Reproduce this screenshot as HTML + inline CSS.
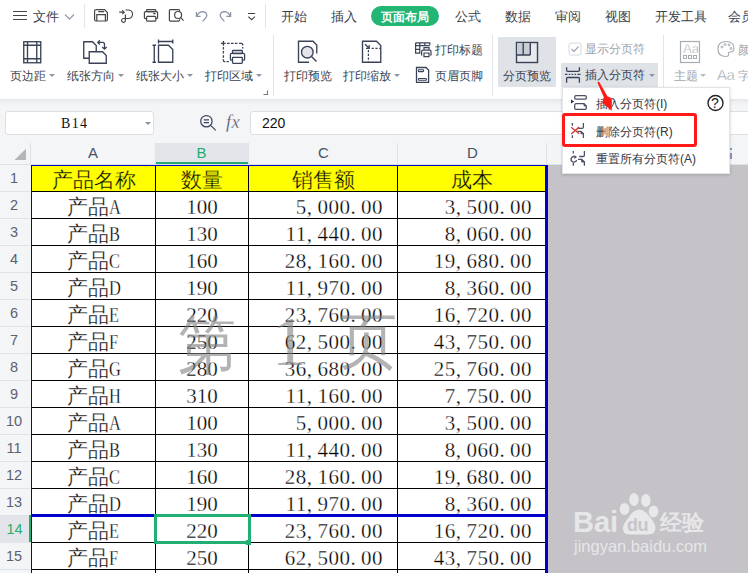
<!DOCTYPE html>
<html><head><meta charset="utf-8">
<style>
*{margin:0;padding:0;box-sizing:border-box}
html,body{width:748px;height:573px;overflow:hidden;background:#fff;font-family:"Liberation Sans",sans-serif;color:#3a3f4e}
.a{position:absolute}
svg{position:absolute;overflow:visible}
.tab{position:absolute;top:9px;font-size:12.5px;line-height:16px;color:#3a3f4e;white-space:nowrap}
.lbl{position:absolute;top:68px;font-size:12px;line-height:16px;color:#3a3f4e;white-space:nowrap}
.tri{position:absolute;width:0;height:0;border-left:3px solid transparent;border-right:3px solid transparent;border-top:3px solid #8d93a3}
.sep{position:absolute;width:1px;background:#e3e5ea}
/* sheet */
.cell{position:absolute;height:27px;line-height:27px;padding-top:2px;font-size:21px;color:#000;white-space:nowrap;font-family:"Liberation Serif",serif}
.hdr{text-align:center;-webkit-text-stroke:0.3px #ffff00}
.ctr{text-align:center;-webkit-text-stroke:0.3px #fff}
.rgt{text-align:right}
.rgt{letter-spacing:0.5px;-webkit-text-stroke:0.3px #fff}
.cell i{font-style:normal;display:inline-block;width:10.6px;text-align:left}
.lat{display:inline-block;transform:scaleX(0.78);transform-origin:0 50%;width:11px;text-align:left}
.rh{position:absolute;left:0;width:28px;height:27px;line-height:27px;text-align:center;font-size:14.5px;color:#5a6174}
.rsel{background:#e3e5ea;color:#1fae6d;width:29px}
.hl{position:absolute;left:31px;width:515px;height:1px;background:#000}
.rhl{position:absolute;left:0;width:30px;height:1px;background:#dde1e8}
.vl{position:absolute;top:165px;width:1px;height:408px;background:#000}
.ch{position:absolute;top:142px;height:21px;line-height:21px;text-align:center;font-size:15px;color:#485066}
.mi{position:absolute;left:596px;font-size:12px;line-height:16px;color:#2f3444;white-space:nowrap}
</style></head><body>

<!-- ===== top tab bar ===== -->
<div class="a" style="left:13px;top:11px;width:14px;height:1.2px;background:#444"></div>
<div class="a" style="left:13px;top:15px;width:14px;height:1.2px;background:#444"></div>
<div class="a" style="left:13px;top:19px;width:14px;height:1.2px;background:#444"></div>
<div class="tab" style="left:33px">文件</div>
<svg style="left:0;top:0" width="748" height="32" fill="none" stroke="#454545" stroke-width="1.3">
 <path d="M65 14.5 L69.5 19 L74 14.5" stroke="#9aa0ac"/>
 <!-- save -->
 <path d="M95.6 9.7 H104.6 L107.4 12.5 V19.8 Q107.4 21 106.2 21 H95.8 Q94.6 21 94.6 19.8 V10.9 Q94.6 9.7 95.8 9.7 Z M98.2 11.7 H104.2 M96.8 21 V14.6 H105.4 V21" stroke-width="1.2"/>
 <!-- convert -->
 <path d="M119.2 12.2 H124.2 M122.3 10.3 L124.2 12.2 L122.3 14.1 M125.5 10 H128.3 A4.25 4.25 0 0 1 128.3 18.5 H123.4 A1.9 1.9 0 1 0 125.4 20.4 V14.4" stroke-width="1.2"/>
 <!-- print -->
 <rect x="146.6" y="9.6" width="9.2" height="2" rx="0.8" stroke-width="1.2"/>
 <path d="M146.3 18.6 H145.4 Q144.4 18.6 144.4 17.6 V12.8 Q144.4 11.6 145.6 11.6 H156.6 Q157.6 11.6 157.6 12.8 V17.6 Q157.6 18.6 156.6 18.6 H155.8 M153.2 13.6 H155.6" stroke-width="1.2"/>
 <rect x="146.6" y="16.4" width="9.2" height="4.8" rx="0.9" stroke-width="1.2"/>
 <!-- preview -->
 <path d="M176 21.1 H170.4 Q169.4 21.1 169.4 20.1 V10.6 Q169.4 9.6 170.4 9.6 H178.6 Q179.6 9.6 179.6 10.6 V11.4 M179.6 19.2 V20.1 Q179.6 21.1 178.6 21.1 H176" stroke-width="1.2"/>
 <circle cx="178.1" cy="15" r="3.5" stroke-width="1.2"/>
 <path d="M180.7 17.7 L183.6 20.6" stroke-width="1.2"/>
 <!-- undo -->
 <path d="M196.4 12 V16.4 H200.6 M197 15.8 Q199 11.6 202.4 11.6 Q206.8 11.8 206.8 15.6 Q206.8 17.4 202.6 21.4" stroke="#8a93a7" stroke-width="1.25"/>
 <!-- redo -->
 <path d="M230.6 12 V16.4 H226.4 M230 15.8 Q228 11.6 224.6 11.6 Q220.2 11.8 220.2 15.6 Q220.2 17.4 224.4 21.4" stroke="#8a93a7" stroke-width="1.25"/>
 <!-- customize -->
 <path d="M248 13.5 H255.2 M248.3 16.6 L251.6 19.6 L254.9 16.6" stroke="#454545" stroke-width="1.2"/>
</svg>
<div class="sep" style="left:84px;top:4px;height:24px"></div>
<div class="sep" style="left:265px;top:4px;height:24px"></div>
<div class="tab" style="left:281px">开始</div>
<div class="tab" style="left:331px">插入</div>
<div class="a" style="left:371px;top:6px;width:68px;height:20px;border-radius:10px;background:#22b574"></div>
<div class="tab" style="left:381px;color:#fff;font-weight:bold;font-size:12px">页面布局</div>
<div class="tab" style="left:455px">公式</div>
<div class="tab" style="left:505px">数据</div>
<div class="tab" style="left:555px">审阅</div>
<div class="tab" style="left:605px">视图</div>
<div class="tab" style="left:655px">开发工具</div>
<div class="tab" style="left:728px">会员</div>

<!-- ===== ribbon ===== -->
<div class="a" style="left:498px;top:37px;width:58px;height:50px;background:#dfe2e7"></div>
<div class="a" style="left:561px;top:63px;width:97px;height:24px;background:#dfe2e7"></div>
<svg style="left:0;top:0" width="748" height="100" fill="none" stroke="#3a4258" stroke-width="1.35">
 <!-- margins -->
 <rect x="23.75" y="41.75" width="17" height="21"/>
 <path d="M27.5 41.75 V62.75 M36.75 41.75 V62.75 M23.75 45.25 H40.75 M23.75 58.75 H40.75"/>
 <!-- orientation -->
 <path d="M89 58.25 H83.75 V41.75 H92.5 L96.25 45.5 V51.5"/>
 <path d="M89.25 51.75 H102.5 L106.25 55.5 V63.25 H89.25 Z"/>
 <path d="M98 42.4 H102.6 Q104.5 42.4 104.5 44.4 V49" stroke-width="1.3"/>
 <path d="M99.9 40.3 L97.8 42.4 L99.9 44.5 M102.3 47 L104.5 49.2 L106.7 47" stroke-width="1.3"/>
 <!-- paper size -->
 <path d="M158.5 41.5 H172.75 M158.5 39.5 V43.5 M172.75 39.5 V43.5"/>
 <path d="M154.25 45.25 V62.25 M152.5 45.25 H156 M152.5 62.25 H156"/>
 <path d="M158.5 45.25 H168.5 L172.75 49.5 V62.25 H158.5 Z"/>
 <!-- print area -->
 <path d="M221 43.3 H225.7 M223.4 41 V45.7 M227 43.3 H229.6 M230.9 43.3 H233.6 M234.9 43.3 H237.5 M239 43.3 H241.6 Q242.7 43.3 242.7 44.4 V45.5 M242.7 46.9 V48.6 M223.4 46.9 V49.5 M223.4 51 V53.5 M223.4 55.3 V57.8 M223.4 59.2 V60.6 Q223.4 61.7 224.5 61.7 H225.3 M226.5 61.7 H228.8" stroke-width="1.3"/>
 <rect x="232.5" y="50.5" width="9.8" height="3" rx="0.6" stroke-width="1.3"/>
 <path d="M232.3 60.2 H231.4 Q230.4 60.2 230.4 59.2 V54.6 Q230.4 53.4 231.6 53.4 H243.4 Q244.6 53.4 244.6 54.6 V59.2 Q244.6 60.2 243.6 60.2 H242.4" stroke-width="1.3"/>
 <rect x="232.5" y="57.4" width="9.8" height="5.9" rx="0.7" stroke-width="1.3" fill="#fff"/>
 <path d="M263.5 94.5 H267.5 V90.5" stroke="#6f7893" stroke-width="1.1"/>
 <!-- print preview -->
 <path d="M309 62.25 H298.5 V41.25 H313 L316.75 45 V53.5"/>
 <circle cx="307.3" cy="52.2" r="5.8" fill="#e3e5ea"/>
 <path d="M311.5 56.5 L316.5 61.5"/>
 <!-- print scale -->
 <path d="M362.5 41.25 H376.5 L380.75 45.5 V62.25 H362.5 Z"/>
 <path d="M368.4 50 V62.5" stroke-dasharray="2.2 1.6" stroke-width="1.25"/>
 <path d="M371.6 48.3 H380.6" stroke-dasharray="2.2 1.6" stroke-width="1.25"/>
 <path d="M365 44.3 L369.2 48.3 M366 48.3 H369.2 V45.1" stroke-width="1.25"/>
 <!-- print titles -->
 <path d="M415.6 42.8 H429.8 V45 M415.6 42.8 V53.2 H419.8 V42.8 M415.6 45.6 H429.8 M415.6 49.4 H419.8 M424.8 42.8 V45.6" stroke-width="1.2"/>
 <path d="M424 50.2 V47.6 H429 V50.2 M422.4 55 H421.6 V51.6 Q421.6 50.2 423 50.2 H429.8 Q431 50.2 431 51.6 V55 H430 M424 53 H429 V56.6 H424 Z" stroke-width="1.2" fill="#fff"/>
 <!-- header footer -->
 <path d="M416.5 67.5 H426 L428.6 70.1 V82.4 H416.5 Z" stroke-width="1.3"/>
 <rect x="418.4" y="69.8" width="5.2" height="1.8" rx="0.6" stroke-width="1.1"/>
 <rect x="418.4" y="78.5" width="8" height="1.8" rx="0.6" stroke-width="1.1"/>
 <!-- page break preview -->
 <rect x="516.5" y="42.5" width="21" height="20" fill="#e8eaed" stroke-width="1.4"/>
 <rect x="517" y="43" width="13" height="12" fill="#c9cdd4" stroke="none"/>
 <path d="M523.2 42.5 V55 M530.3 42.5 V55 M516.5 55 H530.3" stroke-width="1.4"/>
 <!-- checkbox -->
 <rect x="569" y="43" width="12" height="12" rx="2" stroke="#d5d8de" stroke-width="1"/>
 <path d="M571.5 49 L574 51.5 L578.5 46.5" stroke="#a5a9b2" stroke-width="1.3"/>
 <!-- insert page break icon -->
 <path d="M566.6 67.2 V70.2 Q566.6 71.3 567.7 71.3 H578.3 Q579.4 71.3 579.4 70.2 V67.2 M566.6 82.8 V78.6 Q566.6 77.5 567.7 77.5 H578.3 Q579.4 77.5 579.4 78.6 V82.8" stroke-width="1.3"/>
 <path d="M565 74.3 H581" stroke-dasharray="2.4 1.4 1.5 1.4 1.5 1.4 1.5 1.4 3" stroke-width="1.3"/>
 <!-- theme -->
 <rect x="680.5" y="41.5" width="19" height="21" stroke="#a8acb3" stroke-width="1.2"/>
 <rect x="683.5" y="55.5" width="3" height="3" stroke="#a8acb3" stroke-width="1"/>
 <rect x="688.5" y="55.5" width="3" height="3" stroke="#a8acb3" stroke-width="1"/>
 <rect x="693.5" y="55.5" width="3" height="3" stroke="#a8acb3" stroke-width="1"/>
 <!-- palette -->
 <path d="M726 41.5 Q734 41.5 734 48.5 Q734 52 730.5 52 Q728 52 728.5 54 Q729 56.5 726 56.5 Q718 56.5 718 49 Q718 41.5 726 41.5 Z" stroke="#a8acb3" stroke-width="1.2"/>
 <circle cx="722" cy="47" r="1" stroke="#a8acb3" stroke-width="1"/>
 <circle cx="725" cy="44.5" r="1" stroke="#a8acb3" stroke-width="1"/>
 <circle cx="729" cy="45" r="1" stroke="#a8acb3" stroke-width="1"/>
 <circle cx="731" cy="48.5" r="1" stroke="#a8acb3" stroke-width="1"/>
</svg>
<div class="a" style="left:683px;top:42px;font-size:13px;line-height:14px;color:#a8acb3;-webkit-text-stroke:0.3px #fff">Aa</div>
<div class="lbl" style="left:10px">页边距</div><div class="tri" style="left:49px;top:74px"></div>
<div class="lbl" style="left:67px">纸张方向</div><div class="tri" style="left:118px;top:74px"></div>
<div class="lbl" style="left:136px">纸张大小</div><div class="tri" style="left:187px;top:74px"></div>
<div class="lbl" style="left:205px">打印区域</div><div class="tri" style="left:256px;top:74px"></div>
<div class="sep" style="left:273px;top:35px;height:61px"></div>
<div class="lbl" style="left:284px">打印预览</div>
<div class="lbl" style="left:343px">打印缩放</div><div class="tri" style="left:394px;top:74px"></div>
<div class="lbl" style="left:435px;top:42px">打印标题</div>
<div class="lbl" style="left:435px;top:68px">页眉页脚</div>
<div class="sep" style="left:492px;top:35px;height:61px"></div>
<div class="lbl" style="left:503px">分页预览</div>
<div class="lbl" style="left:585px;top:41px;color:#a0a4ad">显示分页符</div>
<div class="lbl" style="left:585px;top:67px">插入分页符</div><div class="tri" style="left:649px;top:74px"></div>
<div class="sep" style="left:663px;top:35px;height:52px"></div>
<div class="lbl" style="left:674px;color:#a0a4ad">主题</div><div class="tri" style="left:700px;top:74px;border-top-color:#b8bcc4"></div>
<div class="lbl" style="left:738px;top:42px;color:#a0a4ad">颜色</div>
<div class="a" style="left:717px;top:67px;font-size:15px;line-height:16px;color:#a0a4ad;letter-spacing:-0.4px;-webkit-text-stroke:0.35px #fff">Aa</div>
<div class="lbl" style="left:738px;color:#a0a4ad">字体</div>

<!-- ===== formula bar ===== -->
<div class="a" style="left:0;top:99px;width:748px;height:474px;background:#f4f5f7"></div>
<div class="a" style="left:0;top:99px;width:748px;height:6px;background:linear-gradient(#e6e7ea,#f4f5f7)"></div>
<div class="a" style="left:5px;top:111px;width:149px;height:23.5px;background:#fff;border:1px solid #dcdfe4;border-radius:3px"></div>
<div class="a" style="left:61px;top:116px;font-size:14px;line-height:16px;color:#111;font-family:'Liberation Serif',serif;letter-spacing:1.3px">B14</div>
<div class="tri" style="left:145px;top:122px;border-top-color:#8a90a0"></div>
<svg style="left:0;top:0" width="748" height="140" fill="none" stroke="#3f4760" stroke-width="1.25">
 <circle cx="206.4" cy="121.2" r="5.7"/>
 <path d="M210.6 125.4 L215.8 130.4 M203.8 119.8 H209 M203.8 122.6 H209"/>
</svg>
<div class="a" style="left:226px;top:112px;font-size:18.5px;line-height:20px;color:#3f4760;font-family:'Liberation Serif',serif;font-style:italic;letter-spacing:0.3px;-webkit-text-stroke:0.3px #f4f5f7">fx</div>
<div class="a" style="left:250px;top:111px;width:510px;height:23.5px;background:#fff;border:1px solid #dcdfe4;border-radius:3px"></div>
<div class="a" style="left:262px;top:114px;font-size:14px;line-height:18px;color:#111">220</div>

<!-- ===== sheet ===== -->
<div class="a" style="left:155px;top:143px;width:93px;height:21px;background:#e3e5ea"></div>
<div class="a" style="left:155px;top:162px;width:93px;height:2px;background:#1fae6d"></div>
<div class="a" style="left:0;top:164px;width:748px;height:1px;background:#dde1e8"></div>
<div class="a" style="left:30px;top:143px;width:1px;height:22px;background:#dde1e8"></div>
<div class="a" style="left:155px;top:143px;width:1px;height:21px;background:#dde1e8"></div>
<div class="a" style="left:248px;top:143px;width:1px;height:21px;background:#dde1e8"></div>
<div class="a" style="left:397px;top:143px;width:1px;height:21px;background:#dde1e8"></div>
<div class="a" style="left:546px;top:143px;width:1px;height:21px;background:#dde1e8"></div>
<svg style="left:0;top:0" width="40" height="170"><path d="M14.5 160 L26 148.8 L26 160 Z" fill="#b4b6ba"/></svg>
<div class="ch" style="left:31px;width:124px">A</div>
<div class="ch" style="left:155px;width:93px;color:#1fae6d">B</div>
<div class="ch" style="left:249px;width:149px">C</div>
<div class="ch" style="left:398px;width:149px">D</div>
<div class="a" style="left:31px;top:165px;width:515px;height:408px;background:#fff"></div>
<div class="a" style="left:548px;top:165px;width:200px;height:408px;background:#c5c3c7"></div>
<div class="a" style="left:31px;top:166px;width:515px;height:25px;background:#ffff00"></div>
<div class="hl" style="top:191px"></div>
<div class="rhl" style="top:191px"></div>
<div class="hl" style="top:218px"></div>
<div class="rhl" style="top:218px"></div>
<div class="hl" style="top:245px"></div>
<div class="rhl" style="top:245px"></div>
<div class="hl" style="top:272px"></div>
<div class="rhl" style="top:272px"></div>
<div class="hl" style="top:299px"></div>
<div class="rhl" style="top:299px"></div>
<div class="hl" style="top:326px"></div>
<div class="rhl" style="top:326px"></div>
<div class="hl" style="top:353px"></div>
<div class="rhl" style="top:353px"></div>
<div class="hl" style="top:380px"></div>
<div class="rhl" style="top:380px"></div>
<div class="hl" style="top:407px"></div>
<div class="rhl" style="top:407px"></div>
<div class="hl" style="top:434px"></div>
<div class="rhl" style="top:434px"></div>
<div class="hl" style="top:461px"></div>
<div class="rhl" style="top:461px"></div>
<div class="hl" style="top:488px"></div>
<div class="rhl" style="top:488px"></div>
<div class="hl" style="top:515px"></div>
<div class="rhl" style="top:515px"></div>
<div class="hl" style="top:542px"></div>
<div class="rhl" style="top:542px"></div>
<div class="hl" style="top:569px"></div>
<div class="rhl" style="top:569px"></div>
<div class="vl" style="left:155px"></div>
<div class="vl" style="left:248px"></div>
<div class="vl" style="left:397px"></div>
<div class="rh" style="top:165px">1</div>
<div class="cell hdr" style="left:32px;top:165px;width:123px">产品名称</div>
<div class="cell hdr" style="left:156px;top:165px;width:92px">数量</div>
<div class="cell hdr" style="left:249px;top:165px;width:148px">销售额</div>
<div class="cell hdr" style="left:398px;top:165px;width:148px">成本</div>
<div class="rh" style="top:192px">2</div>
<div class="cell ctr" style="left:32px;top:192px;width:123px">产品<span class=lat>A</span></div>
<div class="cell ctr" style="left:156px;top:192px;width:92px">100</div>
<div class="cell rgt" style="left:248px;top:192px;width:135px">5<i>,</i>000<i>.</i>00</div>
<div class="cell rgt" style="left:397px;top:192px;width:135px">3<i>,</i>500<i>.</i>00</div>
<div class="rh" style="top:219px">3</div>
<div class="cell ctr" style="left:32px;top:219px;width:123px">产品<span class=lat>B</span></div>
<div class="cell ctr" style="left:156px;top:219px;width:92px">130</div>
<div class="cell rgt" style="left:248px;top:219px;width:135px">11<i>,</i>440<i>.</i>00</div>
<div class="cell rgt" style="left:397px;top:219px;width:135px">8<i>,</i>060<i>.</i>00</div>
<div class="rh" style="top:246px">4</div>
<div class="cell ctr" style="left:32px;top:246px;width:123px">产品<span class=lat>C</span></div>
<div class="cell ctr" style="left:156px;top:246px;width:92px">160</div>
<div class="cell rgt" style="left:248px;top:246px;width:135px">28<i>,</i>160<i>.</i>00</div>
<div class="cell rgt" style="left:397px;top:246px;width:135px">19<i>,</i>680<i>.</i>00</div>
<div class="rh" style="top:273px">5</div>
<div class="cell ctr" style="left:32px;top:273px;width:123px">产品<span class=lat>D</span></div>
<div class="cell ctr" style="left:156px;top:273px;width:92px">190</div>
<div class="cell rgt" style="left:248px;top:273px;width:135px">11<i>,</i>970<i>.</i>00</div>
<div class="cell rgt" style="left:397px;top:273px;width:135px">8<i>,</i>360<i>.</i>00</div>
<div class="rh" style="top:300px">6</div>
<div class="cell ctr" style="left:32px;top:300px;width:123px">产品<span class=lat>E</span></div>
<div class="cell ctr" style="left:156px;top:300px;width:92px">220</div>
<div class="cell rgt" style="left:248px;top:300px;width:135px">23<i>,</i>760<i>.</i>00</div>
<div class="cell rgt" style="left:397px;top:300px;width:135px">16<i>,</i>720<i>.</i>00</div>
<div class="rh" style="top:327px">7</div>
<div class="cell ctr" style="left:32px;top:327px;width:123px">产品<span class=lat>F</span></div>
<div class="cell ctr" style="left:156px;top:327px;width:92px">250</div>
<div class="cell rgt" style="left:248px;top:327px;width:135px">62<i>,</i>500<i>.</i>00</div>
<div class="cell rgt" style="left:397px;top:327px;width:135px">43<i>,</i>750<i>.</i>00</div>
<div class="rh" style="top:354px">8</div>
<div class="cell ctr" style="left:32px;top:354px;width:123px">产品<span class=lat>G</span></div>
<div class="cell ctr" style="left:156px;top:354px;width:92px">280</div>
<div class="cell rgt" style="left:248px;top:354px;width:135px">36<i>,</i>680<i>.</i>00</div>
<div class="cell rgt" style="left:397px;top:354px;width:135px">25<i>,</i>760<i>.</i>00</div>
<div class="rh" style="top:381px">9</div>
<div class="cell ctr" style="left:32px;top:381px;width:123px">产品<span class=lat>H</span></div>
<div class="cell ctr" style="left:156px;top:381px;width:92px">310</div>
<div class="cell rgt" style="left:248px;top:381px;width:135px">11<i>,</i>160<i>.</i>00</div>
<div class="cell rgt" style="left:397px;top:381px;width:135px">7<i>,</i>750<i>.</i>00</div>
<div class="rh" style="top:408px">10</div>
<div class="cell ctr" style="left:32px;top:408px;width:123px">产品<span class=lat>A</span></div>
<div class="cell ctr" style="left:156px;top:408px;width:92px">100</div>
<div class="cell rgt" style="left:248px;top:408px;width:135px">5<i>,</i>000<i>.</i>00</div>
<div class="cell rgt" style="left:397px;top:408px;width:135px">3<i>,</i>500<i>.</i>00</div>
<div class="rh" style="top:435px">11</div>
<div class="cell ctr" style="left:32px;top:435px;width:123px">产品<span class=lat>B</span></div>
<div class="cell ctr" style="left:156px;top:435px;width:92px">130</div>
<div class="cell rgt" style="left:248px;top:435px;width:135px">11<i>,</i>440<i>.</i>00</div>
<div class="cell rgt" style="left:397px;top:435px;width:135px">8<i>,</i>060<i>.</i>00</div>
<div class="rh" style="top:462px">12</div>
<div class="cell ctr" style="left:32px;top:462px;width:123px">产品<span class=lat>C</span></div>
<div class="cell ctr" style="left:156px;top:462px;width:92px">160</div>
<div class="cell rgt" style="left:248px;top:462px;width:135px">28<i>,</i>160<i>.</i>00</div>
<div class="cell rgt" style="left:397px;top:462px;width:135px">19<i>,</i>680<i>.</i>00</div>
<div class="rh" style="top:489px">13</div>
<div class="cell ctr" style="left:32px;top:489px;width:123px">产品<span class=lat>D</span></div>
<div class="cell ctr" style="left:156px;top:489px;width:92px">190</div>
<div class="cell rgt" style="left:248px;top:489px;width:135px">11<i>,</i>970<i>.</i>00</div>
<div class="cell rgt" style="left:397px;top:489px;width:135px">8<i>,</i>360<i>.</i>00</div>
<div class="rh rsel" style="top:516px">14</div>
<div class="cell ctr" style="left:32px;top:516px;width:123px">产品<span class=lat>E</span></div>
<div class="cell ctr" style="left:156px;top:516px;width:92px">220</div>
<div class="cell rgt" style="left:248px;top:516px;width:135px">23<i>,</i>760<i>.</i>00</div>
<div class="cell rgt" style="left:397px;top:516px;width:135px">16<i>,</i>720<i>.</i>00</div>
<div class="rh" style="top:543px">15</div>
<div class="cell ctr" style="left:32px;top:543px;width:123px">产品<span class=lat>F</span></div>
<div class="cell ctr" style="left:156px;top:543px;width:92px">250</div>
<div class="cell rgt" style="left:248px;top:543px;width:135px">62<i>,</i>500<i>.</i>00</div>
<div class="cell rgt" style="left:397px;top:543px;width:135px">43<i>,</i>750<i>.</i>00</div>
<!-- page border -->
<div class="a" style="left:31px;top:165px;width:1px;height:408px;background:#0000cd"></div>
<div class="a" style="left:31px;top:165px;width:516px;height:1px;background:#0000cd"></div>
<div class="a" style="left:545px;top:165px;width:3px;height:408px;background:#0000cd"></div>
<div class="a" style="left:31px;top:514px;width:517px;height:3px;background:#0000cd"></div>
<div class="a" style="left:29px;top:515px;width:2px;height:27px;background:#1fae6d"></div>
<!-- selection -->
<div class="a" style="left:154px;top:514px;width:97px;height:30px;border:3px solid #20b073"></div>
<div class="a" style="left:246px;top:540px;width:5px;height:5px;background:#20b073"></div>
<!-- watermark 第 1 页 -->
<div class="a" style="left:178px;top:306px;font-size:58px;line-height:70px;color:rgba(128,128,128,0.6);transform:scaleY(1.1);transform-origin:50% 0">第</div>
<div class="a" style="left:272px;top:302px;font-size:69px;line-height:80px;color:rgba(128,128,128,0.6);font-family:'Liberation Serif',serif">1</div>
<div class="a" style="left:339px;top:304px;font-size:58px;line-height:70px;color:rgba(128,128,128,0.6);transform:scaleY(1.05);transform-origin:50% 0">页</div>

<!-- baidu watermark -->
<div class="a" style="left:573px;top:505px;font-size:29px;line-height:34px;font-weight:bold;color:rgba(255,255,255,0.6)">Bai</div>
<svg style="left:0;top:0" width="748" height="573" fill="rgba(255,255,255,0.6)">
 <ellipse cx="624.5" cy="509" rx="4.8" ry="6"/><ellipse cx="634" cy="499.5" rx="4.8" ry="6.5"/>
 <ellipse cx="645.8" cy="500.5" rx="4.8" ry="6.5"/><ellipse cx="653.5" cy="511.5" rx="4.8" ry="6"/>
 <path d="M639 509.5 Q633 510 629 517 Q624 523 623 527 Q622 534.5 630 534.5 L648 534.5 Q656 534.5 655.5 527 Q654.5 522 649 516 Q645 510 639 509.5 Z"/>
</svg>
<div class="a" style="left:627px;top:515px;font-size:18px;line-height:20px;font-weight:bold;color:rgba(196,195,200,0.95);letter-spacing:-0.5px">du</div>
<div class="a" style="left:660px;top:509px;font-size:22px;line-height:28px;font-weight:bold;color:rgba(255,255,255,0.6)">经验</div>
<div class="a" style="left:574px;top:536px;font-size:16.5px;line-height:20px;color:rgba(255,255,255,0.6)">jingyan.baidu.com</div>

<!-- ===== dropdown menu ===== -->
<div class="a" style="left:562px;top:87px;width:168px;height:87px;background:#fff;border:1px solid #e2e4e8;box-shadow:0 1px 3px rgba(0,0,0,0.18)"></div>
<svg style="left:0;top:0" width="748" height="180" fill="none" stroke="#4a5266" stroke-width="1.3">
 <path d="M571 99.5 L574.2 101.5 L571 103.5 Z" fill="#2a3148" stroke="none"/>
 <rect x="574.7" y="95.6" width="11.6" height="3.6" rx="1.3"/>
 <path d="M576.2 103.6 H584 L586.3 105.9 V108 Q586.3 109.3 585 109.3 H576 Q574.7 109.3 574.7 108 V105 Q574.7 103.6 576.2 103.6 Z"/>
 <path d="M584 103.6 V105.9 H586.3" fill="#4a5266" stroke-width="1"/>
 <path d="M572.4 123 V125.8 M572.4 135.2 V138 M583.4 123 V127 Q583.4 128.3 582 128.3 H577.3 M577.3 131.4 H581 L583.4 133.8 V138"/>
 <path d="M581 131.4 L583.4 133.8 H581 Z" fill="#4a5266" stroke-width="1"/>
 <path d="M571.2 127.3 L579.2 133.7 M571.2 134 L579.2 127.1" stroke="#d23c3c" stroke-width="1.4"/>
 <path d="M573.3 151 V153.6 M573.3 163 V165.8 M584.4 151 V155.2 Q584.4 156.5 583 156.5 H579.2 M578 159.4 H581.7 L584.4 162 V165.8"/>
 <path d="M581.7 159.4 L584.4 162 H581.7 Z" fill="#4a5266" stroke-width="1"/>
 <path d="M576.6 160 A2.8 2.8 0 1 1 574.5 156.6"/>
 <path d="M574.3 155 L577 157 L574.3 159 Z" fill="#4a5266" stroke="none"/>
 <circle cx="715.5" cy="103" r="7.5" stroke="#222" stroke-width="1.4"/>
</svg>
<div class="a" style="left:711px;top:95px;font-size:14px;line-height:16px;color:#222">?</div>
<div class="mi" style="top:96px">插入分页符(I)</div>
<div class="mi" style="top:124px">删除分页符(R)</div>
<div class="mi" style="top:151px">重置所有分页符(A)</div>
<div class="a" style="left:562px;top:113px;width:135px;height:34px;border:3px solid #ff1a1a;border-radius:3px"></div>
<!-- red arrow -->
<svg style="left:0;top:0" width="748" height="180">
 <path d="M597.4 82.4 L599 81.6 L607.4 96.2 L611.8 98.2 L611.8 110.8 L602.2 102.8 L603.8 97.2 Z" fill="#ff1a1a"/>
</svg>
<div class="a" style="left:730px;top:148px;width:2px;height:2px;background:#8090c0"></div><div class="a" style="left:730px;top:153px;width:2px;height:6px;background:#9088b0"></div>
</body></html>
